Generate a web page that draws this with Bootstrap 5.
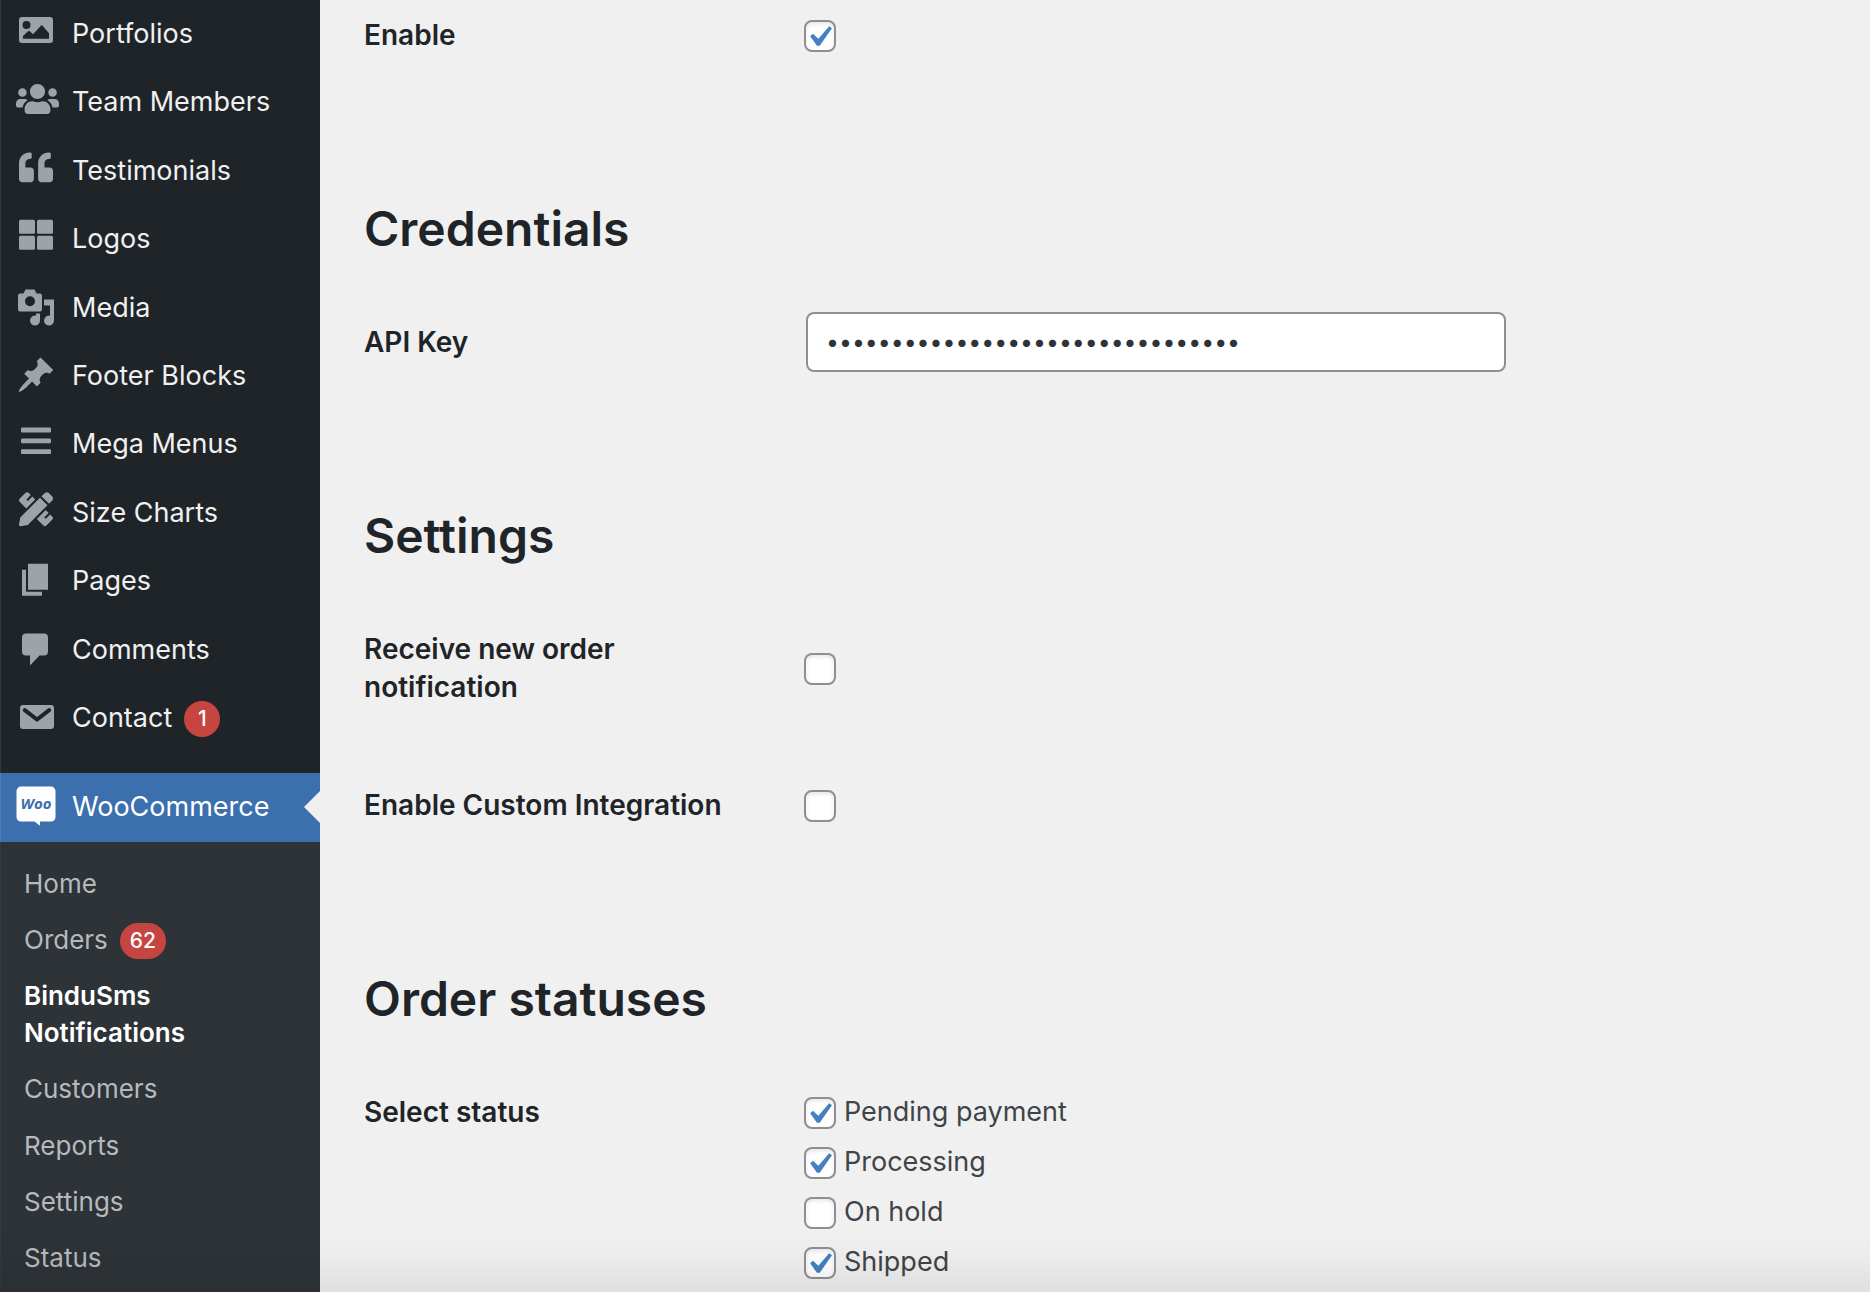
<!DOCTYPE html>
<html lang="en">
<head>
<meta charset="utf-8">
<meta name="viewport" content="width=device-width, initial-scale=1">
<title>BinduSms Notifications</title>
<link href="https://cdn.jsdelivr.net/npm/bootstrap@5.3.0/dist/css/bootstrap.min.css" rel="stylesheet">
<style>
  :root { --ink: #1f2428; --page: #f0f0f0; --side: #1f2428; --sub: #2e3338; --accent: #3b6fad; --alert: #c74540; }
  body { font-family: Inter, "Open Sans", sans-serif; font-size: 26px; line-height: 1.4; color: #3f4449; background: var(--page); }
  .admin-side { width: 320px; background: var(--side); border-left: 1px solid #34393d; }
  .menu-link { padding: 16px 0 16px 71px; color: #f0f0f1; position: relative; }
  .menu-link:hover { color: #fff; }
  .menu-text { font-size: 27px; line-height: 1; }
  .menu-icon { position: absolute; left: 9px; top: 10px; width: 56px; height: 44px; fill: #9ea2a9; }
  .menu-gap { height: 21px; }
  .menu-link.active { background: var(--accent); color: #fff; margin-left: -1px; border-left: 1px solid #4b7bb4; }
  .menu-link.active .menu-icon { fill: #fff; }
  .menu-link.active::after { content: ""; position: absolute; right: 0; top: 50%; margin-top: -16px; border: 16px solid transparent; border-right-color: var(--page); border-left: 0; }
  .sub-list { background: var(--sub); padding: 14px 0 5px; }
  .sub-link { padding: 10px 80px 10px 23px; color: #b6babe; }
  .sub-link.current { color: #fff; font-weight: 600; }
  .count-pill { min-width: 36px; height: 36px; margin: 1px 0 -1px 12px; padding: 0 10px; border-radius: 18px; background: var(--alert); color: #fff; font-size: 21px; line-height: 36px; font-weight: 500; }
  .settings-main { padding: 16px 44px 0; }
  .section-title { margin: 105px 0 24px; font-size: 48px; line-height: 60px; font-weight: 600; color: var(--ink); }
  .field-row { padding: 40px 0; }
  .field-row.first-row { padding-top: 0; }
  .field-name { width: 400px; margin-right: 40px; font-size: 28px; line-height: 38px; font-weight: 600; color: var(--ink); }
  .field-name > * { display: block; max-width: 380px; }
  .tick { appearance: none; flex: none; width: 32px; height: 32px; margin: 2px 0 0; border: 2px solid #8e8e94; border-radius: 8px; background: #fff no-repeat -8px -6px / 42px 42px; box-shadow: inset 0 2px 4px rgba(0,0,0,.1); }
  .tick:checked { background-image: url("data:image/svg+xml,%3Csvg xmlns='http://www.w3.org/2000/svg' viewBox='0 0 20 20'%3E%3Cpath d='M14.83 4.89l1.34.94-5.81 8.38H9.02L5.78 9.67l1.34-1.25 2.57 2.4z' fill='%234580c2'/%3E%3C/svg%3E"); }
  .key-input { display: block; width: 700px; height: 60px; margin: -11px 0 -11px 2px; padding: 0 18px; border: 2px solid #8e8e94; border-radius: 8px; font-size: 23px; color: #2e3338; }
  .status-line { height: 38px; margin-bottom: 12px; gap: 8px; font-size: 27px; line-height: 38px; }
  .edge-shade { height: 62px; background: linear-gradient(rgba(0,0,0,0), rgba(0,0,0,.015) 40%, rgba(0,0,0,.065)); pointer-events: none; }
</style>
</head>
<body>
<div class="d-flex min-vh-100">
  <nav class="admin-side flex-shrink-0" aria-label="Admin menu">
    <ul class="nav flex-column flex-nowrap">
      <li><a class="menu-link d-block text-decoration-none" href="#"><svg class="menu-icon" viewBox="10 10 56 44" aria-hidden="true"><path fill-rule="evenodd" d="M22 17h28a3 3 0 0 1 3 3v20a3 3 0 0 1-3 3H22a3 3 0 0 1-3-3V20a3 3 0 0 1 3-3zM26.500 21a4 4 0 1 0 0 8 4 4 0 0 0 0-8zM23 38.700h26v-5.500L42.300 25.600a.8.8 0 0 0-1.200 0L33 34.200l-3.500-3.300a.8.800 0 0 0-1.100 0L23 36z"/></svg><span class="menu-text">Portfolios</span></a></li>
      <li><a class="menu-link d-block text-decoration-none" href="#"><svg class="menu-icon" viewBox="10 10 56 44" aria-hidden="true"><path transform="translate(16 13.800) scale(.0672)" d="M96 224c35.300 0 64-28.700 64-64s-28.700-64-64-64-64 28.700-64 64 28.700 64 64 64zm448 0c35.300 0 64-28.700 64-64s-28.700-64-64-64-64 28.700-64 64 28.700 64 64 64zm32 32h-64c-17.600 0-33.500 7.100-45.100 18.600 40.300 22.100 68.900 62 75.100 109.400h66c17.700 0 32-14.300 32-32v-32c0-35.300-28.700-64-64-64zm-256 0c61.900 0 112-50.100 112-112S381.900 32 320 32 208 82.100 208 144s50.100 112 112 112zm76.800 32h-8.300c-20.800 10-43.900 16-68.500 16s-47.600-6-68.500-16h-8.300C179.600 288 128 339.600 128 403.200V432c0 26.500 21.500 48 48 48h288c26.500 0 48-21.500 48-48v-28.800c0-63.600-51.600-115.200-115.200-115.200zm-223.700-13.400C161.500 263.100 145.600 256 128 256H64c-35.300 0-64 28.700-64 64v32c0 17.700 14.300 32 32 32h65.900c6.300-47.400 34.900-87.300 75.200-109.400z"/></svg><span class="menu-text">Team Members</span></a></li>
      <li><a class="menu-link d-block text-decoration-none" href="#"><svg class="menu-icon" viewBox="10 10 56 44" aria-hidden="true"><path transform="translate(19 13.400) scale(.0664)" d="M464 256h-80v-64c0-35.300 28.700-64 64-64h8c13.300 0 24-10.700 24-24V56c0-13.300-10.700-24-24-24h-8c-88.400 0-160 71.600-160 160v240c0 26.500 21.500 48 48 48h128c26.500 0 48-21.500 48-48V304c0-26.500-21.500-48-48-48zm-288 0H96v-64c0-35.300 28.700-64 64-64h8c13.300 0 24-10.700 24-24V56c0-13.300-10.700-24-24-24h-8C71.600 32 0 103.600 0 192v240c0 26.500 21.500 48 48 48h128c26.500 0 48-21.500 48-48V304c0-26.500-21.500-48-48-48z"/></svg><span class="menu-text">Testimonials</span></a></li>
      <li><a class="menu-link d-block text-decoration-none" href="#"><svg class="menu-icon" viewBox="10 10 56 44" aria-hidden="true"><rect x="19" y="14.800" width="16" height="14" rx="1.500"/><rect x="37" y="14.800" width="16" height="14" rx="1.500"/><rect x="19" y="30.800" width="16" height="14" rx="1.500"/><rect x="37" y="30.800" width="16" height="14" rx="1.500"/></svg><span class="menu-text">Logos</span></a></li>
      <li><a class="menu-link d-block text-decoration-none" href="#"><svg class="menu-icon" viewBox="10 10 56 44" aria-hidden="true"><path fill-rule="evenodd" d="M20 19.400h3.500l2-4h9l2 4H40a2 2 0 0 1 2 2v14a2 2 0 0 1-2 2H20a2 2 0 0 1-2-2v-14a2 2 0 0 1 2-2zM30 22.200a5 5 0 1 0 0 10 5 5 0 0 0 0-10z"/><path d="M44 25.400h10v21.200a5 5 0 1 1-4-4.900V31.400h-6zM40 39.400v7.200a5 5 0 1 1-4-4.900v-2.300z"/></svg><span class="menu-text">Media</span></a></li>
      <li><a class="menu-link d-block text-decoration-none" href="#"><svg class="menu-icon" viewBox="10 10 56 44" aria-hidden="true"><path transform="translate(16 13) scale(2)" d="M10.440 3.020l1.820-1.820 6.360 6.350-1.830 1.820c-1.050-.68-2.480-.57-3.410.36l-.75.75c-.92.93-1.040 2.350-.35 3.410l-1.830 1.820-2.410-2.410-2.800 2.790c-.42.42-3.380 2.710-3.800 2.290s1.860-3.390 2.280-3.810l2.790-2.790L4.100 9.360l1.830-1.820c1.050.69 2.480.57 3.400-.36l.75-.75c.93-.92 1.050-2.350.36-3.410z"/></svg><span class="menu-text">Footer Blocks</span></a></li>
      <li><a class="menu-link d-block text-decoration-none" href="#"><svg class="menu-icon" viewBox="10 10 56 44" aria-hidden="true"><rect x="21" y="17.600" width="30" height="4.800" rx="1"/><rect x="21" y="28.500" width="30" height="4.800" rx="1"/><rect x="21" y="39.300" width="30" height="4.800" rx="1"/></svg><span class="menu-text">Mega Menus</span></a></li>
      <li><a class="menu-link d-block text-decoration-none" href="#"><svg class="menu-icon" viewBox="10 10 56 44" aria-hidden="true"><path transform="translate(19 13.200) scale(.0664)" d="M109.460 244.040l134.580-134.560-44.120-44.120-61.680 61.680a7.919 7.919 0 0 1-11.210 0l-11.210-11.210c-3.100-3.100-3.100-8.120 0-11.210l61.680-61.680-33.640-33.650C131.470-3.100 111.390-3.100 99 9.290L9.290 99c-12.380 12.390-12.390 32.470 0 44.860l100.170 100.180zm388.470-116.800c18.760-18.760 18.750-49.170 0-67.930l-45.250-45.250c-18.760-18.760-49.180-18.760-67.950 0l-46.020 46.010 113.200 113.200 46.020-46.030zM316.080 82.710l-297 296.960L.32 487.110c-2.530 14.490 10.090 27.110 24.590 24.560l107.450-18.840L429.280 195.900 316.080 82.710zm186.630 285.430l-33.640-33.640-61.680 61.680c-3.100 3.100-8.120 3.100-11.210 0l-11.210-11.210c-3.090-3.100-3.090-8.120 0-11.210l61.680-61.680-44.140-44.140L267.930 402.500l100.210 100.200c12.390 12.390 32.470 12.390 44.860 0l89.710-89.700c12.390-12.390 12.390-32.470 0-44.860z"/></svg><span class="menu-text">Size Charts</span></a></li>
      <li><a class="menu-link d-block text-decoration-none" href="#"><svg class="menu-icon" viewBox="10 10 56 44" aria-hidden="true"><path d="M28 16.800h20v26H28zM22 22.800h4v22h16v4H22z"/></svg><span class="menu-text">Pages</span></a></li>
      <li><a class="menu-link d-block text-decoration-none" href="#"><svg class="menu-icon" viewBox="10 10 56 44" aria-hidden="true"><path d="M26 17.400h18a4 4 0 0 1 4 4v14a4 4 0 0 1-4 4h-4.500l-9.500 10v-10h-4a4 4 0 0 1-4-4v-14a4 4 0 0 1 4-4z"/></svg><span class="menu-text">Comments</span></a></li>
      <li><a class="menu-link d-flex align-items-center text-decoration-none" href="#"><svg class="menu-icon" viewBox="10 10 56 44" aria-hidden="true"><rect x="20" y="21" width="34" height="24" rx="3"/><path d="M24.800 26.200L37 35.600l12.200-9.400" fill="none" stroke="#1f2428" stroke-width="4" stroke-linecap="round"/></svg><span><span class="menu-text">Contact</span></span><span class="count-pill text-center">1</span></a></li>
      <li class="menu-gap" role="separator"></li>
      <li><a class="menu-link active d-block text-decoration-none" href="#" aria-current="true"><svg class="menu-icon" viewBox="10 10 56 44" aria-hidden="true"><path d="M21 13.600h30a4.500 4.500 0 0 1 4.500 4.500v26a4.500 4.500 0 0 1-4.500 4.500H40v4.200l-5.500-4.200H21a4.500 4.500 0 0 1-4.500-4.500v-26a4.500 4.500 0 0 1 4.500-4.500z"/><text x="36" y="36" text-anchor="middle" font-family="Open Sans, sans-serif" font-size="15" font-weight="700" font-style="italic" fill="#3b6fad">Woo</text></svg><span class="menu-text">WooCommerce</span></a>
        <ul class="sub-list list-unstyled mb-0">
          <li><a class="sub-link d-block text-decoration-none" href="#">Home</a></li>
          <li><a class="sub-link d-flex align-items-center text-decoration-none" href="#"><span>Orders</span><span class="count-pill text-center">62</span></a></li>
          <li><a class="sub-link current d-block text-decoration-none" href="#" aria-current="page">BinduSms Notifications</a></li>
          <li><a class="sub-link d-block text-decoration-none" href="#">Customers</a></li>
          <li><a class="sub-link d-block text-decoration-none" href="#">Reports</a></li>
          <li><a class="sub-link d-block text-decoration-none" href="#">Settings</a></li>
          <li><a class="sub-link d-block text-decoration-none" href="#">Status</a></li>
        </ul>
      </li>
    </ul>
  </nav>

  <main class="settings-main flex-grow-1">
    <form>
      <div class="field-row first-row d-flex align-items-center">
        <div class="field-name"><label for="enable">Enable</label></div>
        <input class="tick" type="checkbox" id="enable" checked>
      </div>

      <h2 class="section-title">Credentials</h2>
      <div class="field-row d-flex align-items-center">
        <div class="field-name"><label for="apikey">API Key</label></div>
        <div class="flex-grow-1"><input class="key-input mw-100" type="password" id="apikey" value="0123456789abcdef0123456789abcdef" autocomplete="off"></div>
      </div>

      <h2 class="section-title">Settings</h2>
      <div class="field-row d-flex align-items-center">
        <div class="field-name"><label for="neworder">Receive new order notification</label></div>
        <input class="tick" type="checkbox" id="neworder">
      </div>
      <div class="field-row d-flex align-items-center">
        <div class="field-name"><label for="custom">Enable Custom Integration</label></div>
        <input class="tick" type="checkbox" id="custom">
      </div>

      <h2 class="section-title">Order statuses</h2>
      <div class="field-row pb-0 d-flex align-items-start" role="group" aria-labelledby="statuses">
        <div class="field-name"><span id="statuses">Select status</span></div>
        <div>
          <div class="status-line d-flex align-items-center"><input class="tick" type="checkbox" id="s1" checked><label for="s1">Pending payment</label></div>
          <div class="status-line d-flex align-items-center"><input class="tick" type="checkbox" id="s2" checked><label for="s2">Processing</label></div>
          <div class="status-line d-flex align-items-center"><input class="tick" type="checkbox" id="s3"><label for="s3">On hold</label></div>
          <div class="status-line mb-0 d-flex align-items-center"><input class="tick" type="checkbox" id="s4" checked><label for="s4">Shipped</label></div>
        </div>
      </div>
    </form>
  </main>
</div>
<div class="edge-shade fixed-bottom"></div>
<script src="https://cdn.jsdelivr.net/npm/bootstrap@5.3.0/dist/js/bootstrap.bundle.min.js"></script>
</body>
</html>
